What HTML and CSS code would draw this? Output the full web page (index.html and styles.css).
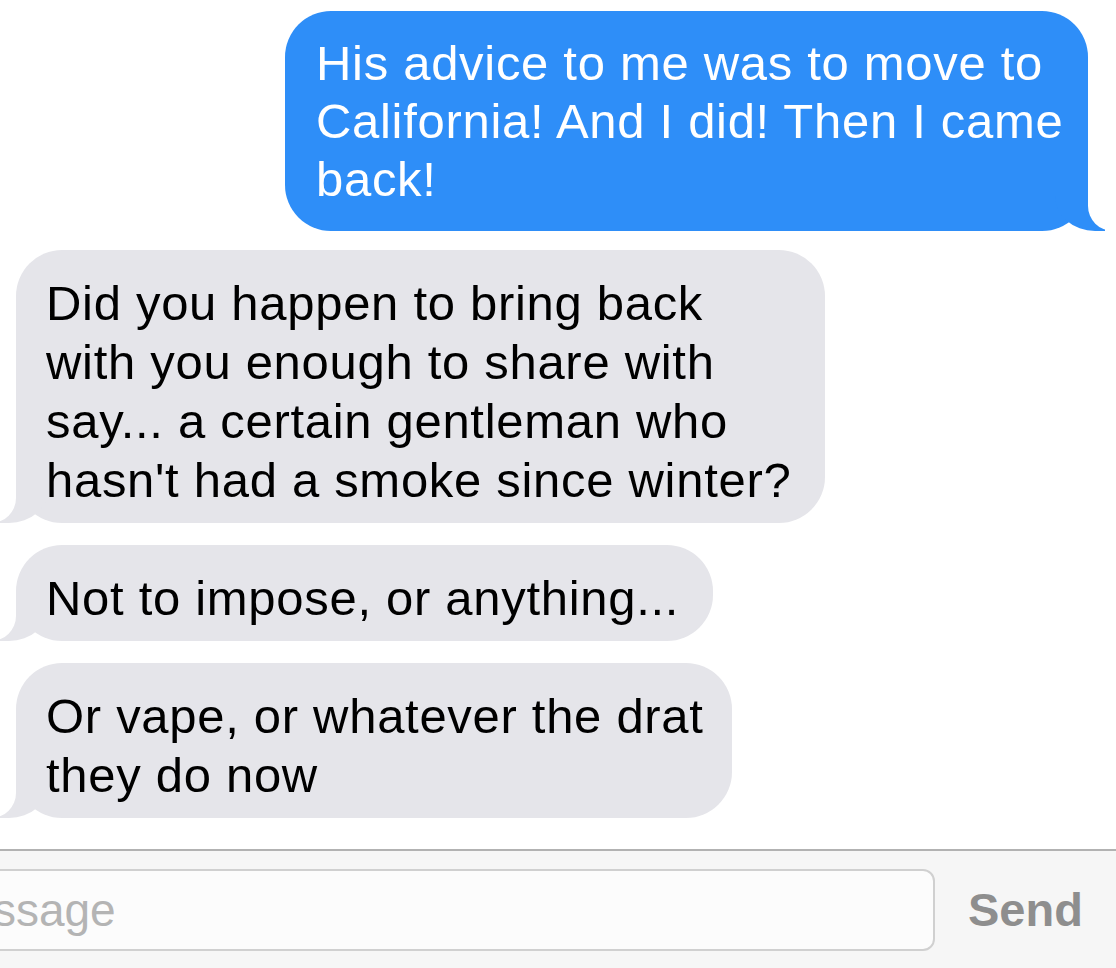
FILE: index.html
```html
<!DOCTYPE html>
<html lang="en">
<head>
    <meta charset="UTF-8">
    <title>Messages</title>
    <link rel="stylesheet" href="styles.css">
</head>
<body>
    <div class="thread">
        <div class="bubble sent">His advice to me was to move to<br>California! And I did! Then I came<br>back!</div>
        <div class="bubble received first">Did you happen to bring back<br>with you enough to share with<br>say... a certain gentleman who<br>hasn't had a smoke since winter?</div>
        <div class="bubble received second">Not to impose, or anything...</div>
        <div class="bubble received third">Or vape, or whatever the drat<br>they do now</div>
    </div>
    <footer class="compose">
        <div class="field">Message</div>
        <span class="send">Send</span>
    </footer>
</body>
</html>
```

FILE: styles.css
```css
body {
    margin: 0;
    background: #fff;
    font-family: "Liberation Sans", Arial, sans-serif;
    overflow: hidden;
    width: 1116px;
    height: 968px;
}

.thread {
    display: flex;
    flex-direction: column;
    padding-top: 11px;
    height: 849px;
    box-sizing: border-box;
}

.bubble {
    position: relative;
    box-sizing: border-box;
    font-size: 49px;
    letter-spacing: 0.7px;
    line-height: 59px;
    padding: 24px 20px 13px 30px;
    border-radius: 46px;
    white-space: nowrap;
}

.sent {
    align-self: flex-end;
    margin-right: 28px;
    width: 803px;
    background: #2e8ef8;
    color: #fff;
    line-height: 58px;
    padding: 23px 20px 23px 31px;
}

.received {
    align-self: flex-start;
    margin-left: 16px;
    margin-top: 22px;
    background: #e5e5ea;
    color: #000;
}

.first {
    margin-top: 19px;
    width: 809px;
}

.second {
    width: 697px;
}

.third {
    width: 716px;
}

/* tails */
.bubble::before,
.bubble::after {
    content: "";
    position: absolute;
    bottom: 0;
    height: 50px;
}

.sent::before {
    right: -17px;
    width: 50px;
    background: #2e8ef8;
    border-bottom-left-radius: 40px 35px;
}

.sent::after {
    right: -65px;
    width: 65px;
    background: #fff;
    border-bottom-left-radius: 25px;
}

.received::before {
    left: -17px;
    width: 50px;
    background: #e5e5ea;
    border-bottom-right-radius: 40px 35px;
}

.received::after {
    left: -65px;
    width: 65px;
    background: #fff;
    border-bottom-right-radius: 25px;
}

.compose {
    border-top: 2px solid #b2b2b2;
    background: #f6f6f6;
    height: 119px;
    box-sizing: border-box;
    display: flex;
    align-items: flex-start;
    padding-top: 18px;
}

.field {
    margin-left: -92px;
    width: 1027px;
    height: 82px;
    box-sizing: border-box;
    border: 2px solid #d0d0d0;
    border-radius: 12px;
    background: #fcfcfc;
    color: #b4b4b4;
    font-size: 46px;
    line-height: 78px;
    padding-left: 19px;
}

.send {
    margin-left: 33px;
    font-size: 47px;
    font-weight: bold;
    color: #8e8e8e;
    line-height: 82px;
}
```
